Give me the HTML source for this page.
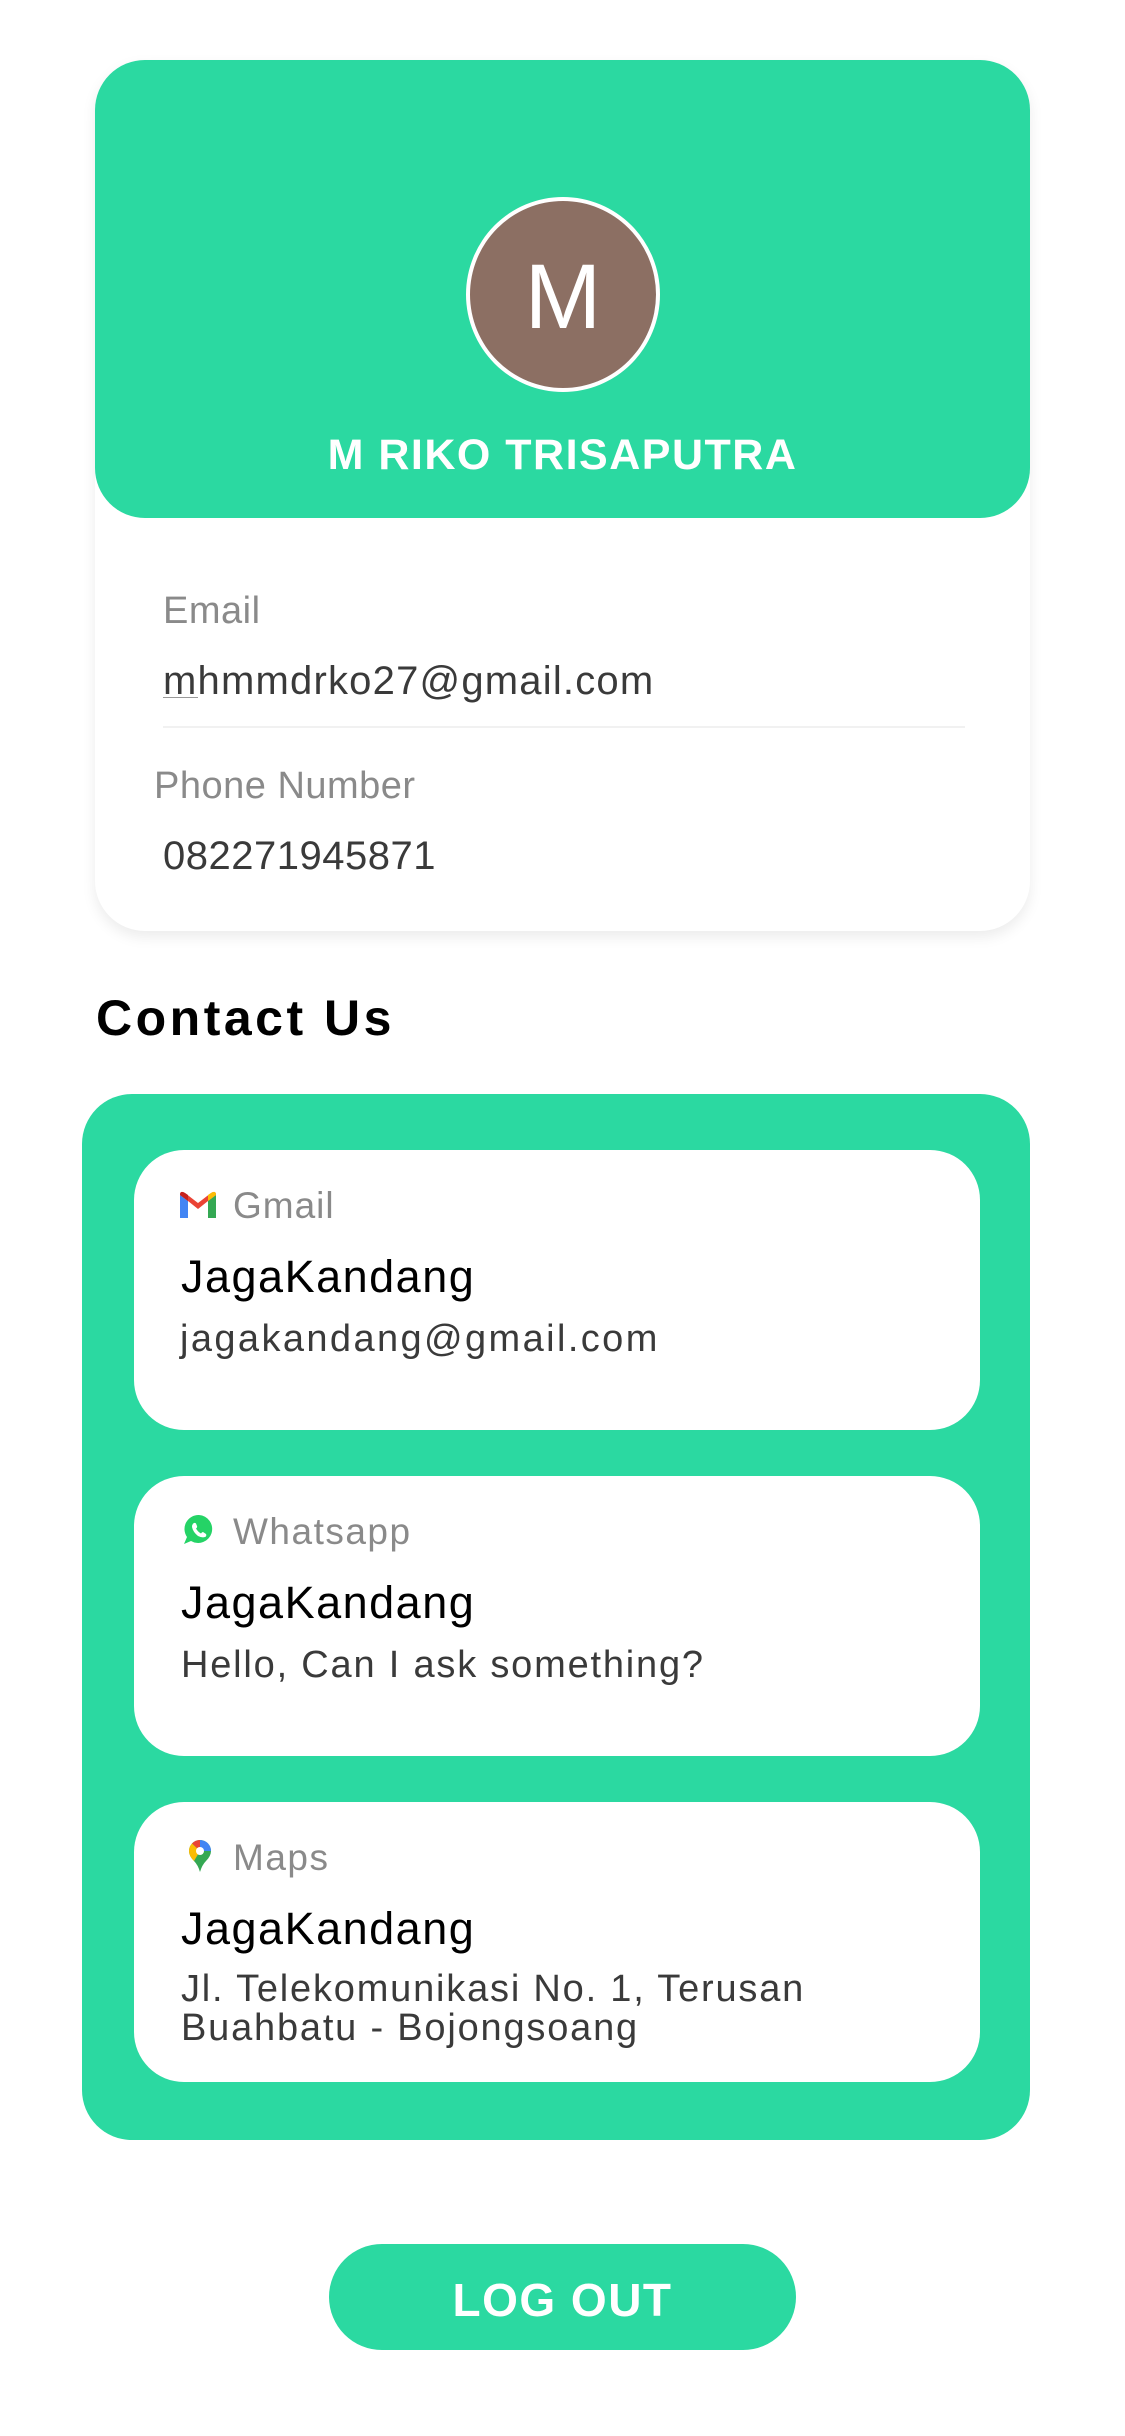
<!DOCTYPE html>
<html><head><meta charset="utf-8"><style>
*{margin:0;padding:0;box-sizing:border-box}
body{width:1125px;height:2436px;background:#fff;position:relative;overflow:hidden;font-family:"Liberation Sans",sans-serif}
.a{position:absolute;line-height:1;white-space:nowrap}
.g{background:#2BD9A1}
</style></head><body>
<div class="a" style="left:95px;top:60px;width:935px;height:871px;border-radius:50px;background:#fff;box-shadow:0 6px 14px rgba(0,0,0,0.08)"></div>
<div class="a g" style="left:95px;top:60px;width:935px;height:458px;border-radius:50px"></div>
<div class="a" style="left:466px;top:197px;width:194px;height:195px;border-radius:50%;background:#8C6F63;border:4px solid #fff"></div>
<div class="a" style="left:466px;top:251px;width:194px;text-align:center;color:#fff;font-size:92px">M</div>
<div class="a" style="left:95px;top:434px;width:935px;text-align:center;color:#fff;font-size:43px;font-weight:bold;letter-spacing:1.5px">M RIKO TRISAPUTRA</div>
<div class="a" style="left:163px;top:592px;color:#8a8a8a;font-size:38px;letter-spacing:0.5px">Email</div>
<div class="a" style="left:163px;top:661px;color:#3a3a3a;font-size:40px;letter-spacing:1.2px">mhmmdrko27@gmail.com</div>
<div class="a" style="left:163px;top:697px;width:35px;height:1px;background:#999"></div>
<div class="a" style="left:163px;top:726px;width:802px;height:2px;background:#f1f1f1"></div>
<div class="a" style="left:154px;top:767px;color:#8a8a8a;font-size:38px;letter-spacing:0.5px">Phone Number</div>
<div class="a" style="left:163px;top:836px;color:#3a3a3a;font-size:40px;letter-spacing:0.5px">082271945871</div>
<div class="a" style="left:96px;top:993px;color:#000;font-size:50px;font-weight:bold;letter-spacing:3.5px">Contact Us</div>
<div class="a g" style="left:82px;top:1094px;width:948px;height:1046px;border-radius:50px"></div>

<!-- card 1 -->
<div class="a" style="left:134px;top:1150px;width:846px;height:280px;border-radius:50px;background:#fff"></div>
<svg class="a" style="left:180px;top:1191px" width="36" height="27" viewBox="0 0 36 27">
<path d="M0 4 L0 27 L8 27 L8 10 Z" fill="#4285F4"/><path d="M28 10 L28 27 L36 27 L36 4 Z" fill="#34A853"/>
<path d="M0 4 Q0 -1 5 2 L18 12 L31 2 Q36 -1 36 4 L28 10 L18 18 L8 10 Z" fill="#EA4335"/>
<path d="M28 10 L36 4 Q36 -1 31 2 L28 4 Z" fill="#FBBC04"/><path d="M0 4 Q0 -1 5 2 L8 4 L8 10 Z" fill="#C5221F"/></svg>
<div class="a" style="left:233px;top:1187px;color:#8a8a8a;font-size:37px;letter-spacing:1px">Gmail</div>
<div class="a" style="left:181px;top:1254px;color:#000;font-size:45px;letter-spacing:1.5px">JagaKandang</div>
<div class="a" style="left:180px;top:1320px;color:#3a3a3a;font-size:38px;letter-spacing:2.4px">jagakandang@gmail.com</div>

<!-- card 2 -->
<div class="a" style="left:134px;top:1476px;width:846px;height:280px;border-radius:50px;background:#fff"></div>
<svg class="a" style="left:183px;top:1514px" width="32" height="32" viewBox="0 0 32 32">
<path d="M16 1 A14 14 0 1 1 8 27 L1 30 L4 23 A14 14 0 0 1 16 1 Z" fill="#25D366"/>
<path d="M11 9 Q9 10 9 13 Q10 18 15 22 Q19 24 22 23 Q24 22 23 20 L20 18 Q19 18 18 19.5 Q15 18 13 14.5 Q14.5 13.5 14 12 L13 9.5 Q12 8.5 11 9 Z" fill="#fff"/></svg>
<div class="a" style="left:233px;top:1513px;color:#8a8a8a;font-size:37px;letter-spacing:1.5px">Whatsapp</div>
<div class="a" style="left:181px;top:1580px;color:#000;font-size:45px;letter-spacing:1.5px">JagaKandang</div>
<div class="a" style="left:181px;top:1646px;color:#3a3a3a;font-size:38px;letter-spacing:1.8px">Hello, Can I ask something?</div>

<!-- card 3 -->
<div class="a" style="left:134px;top:1802px;width:846px;height:280px;border-radius:50px;background:#fff"></div>
<svg class="a" style="left:189px;top:1840px" width="22" height="32" viewBox="0 0 22 32">
<path d="M11 0 A11 11 0 0 1 22 11 Q22 16 17 21 Q13 25 11 32 Q9 25 5 21 Q0 16 0 11 A11 11 0 0 1 11 0 Z" fill="#34A853"/>
<path d="M11 0 A11 11 0 0 1 22 11 L11 11 Z" fill="#4285F4"/><path d="M11 0 A11 11 0 0 0 3 3.5 L11 11 Z" fill="#EA4335"/>
<path d="M3 3.5 A11 11 0 0 0 0 11 Q0 16 5 21 L11 11 Z" fill="#FBBC04"/><circle cx="11" cy="11" r="4" fill="#fff"/></svg>
<div class="a" style="left:233px;top:1839px;color:#8a8a8a;font-size:37px;letter-spacing:1.5px">Maps</div>
<div class="a" style="left:181px;top:1906px;color:#000;font-size:45px;letter-spacing:1.5px">JagaKandang</div>
<div class="a" style="left:181px;top:1970px;color:#3a3a3a;font-size:38px;letter-spacing:1.8px;line-height:39px">Jl. Telekomunikasi No. 1, Terusan<br>Buahbatu - Bojongsoang</div>

<div class="a g" style="left:329px;top:2244px;width:467px;height:106px;border-radius:53px"></div>
<div class="a" style="left:329px;top:2277px;width:467px;text-align:center;color:#fff;font-size:46px;font-weight:bold;letter-spacing:1.5px">LOG OUT</div>
</body></html>
